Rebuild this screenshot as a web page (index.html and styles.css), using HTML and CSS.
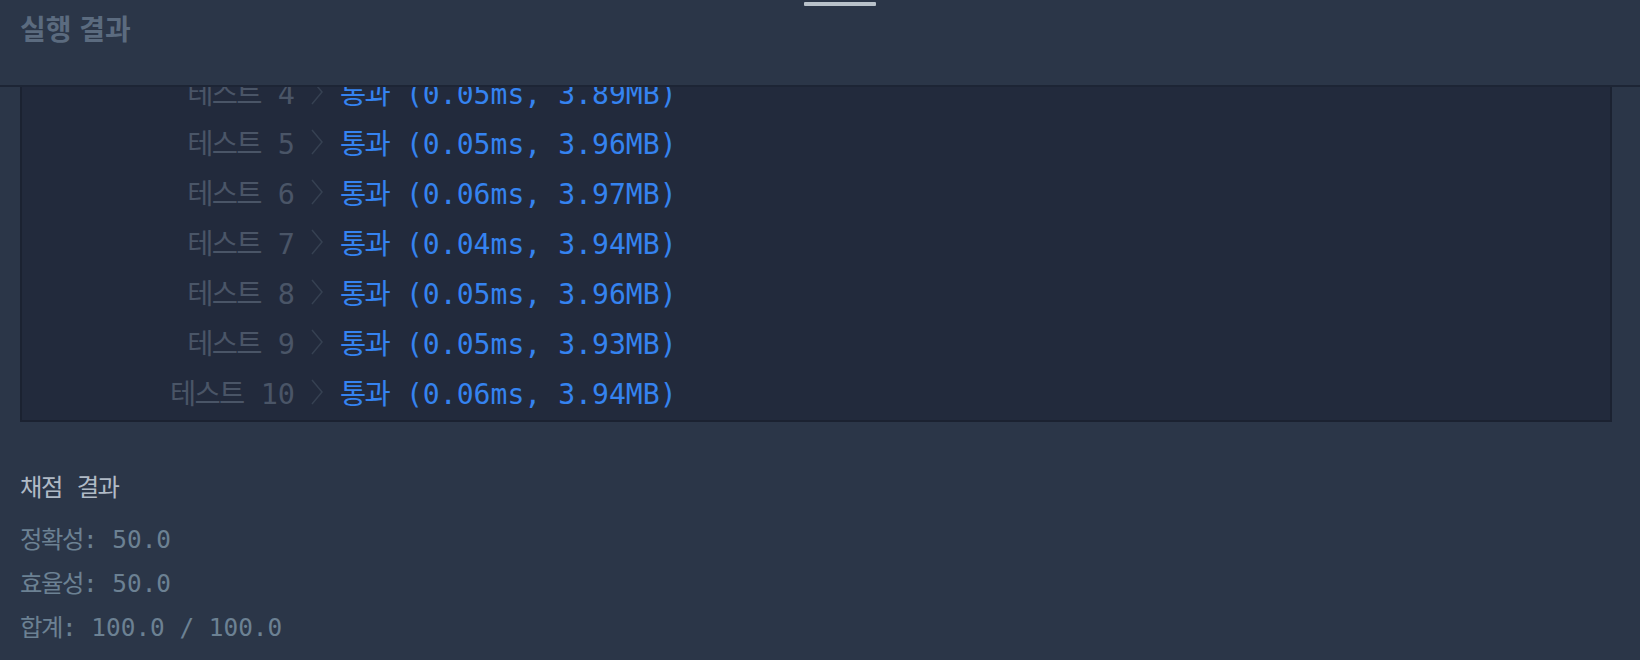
FILE: index.html
```html
<!DOCTYPE html>
<html lang="ko">
<head>
<meta charset="utf-8">
<title>실행 결과</title>
<link rel="stylesheet" href="styles.css">
</head>
<body>
<div class="handle"></div>
<header class="head"><h2 class="head-title">실행 결과</h2></header>
<div class="console">
  <div class="rows">
    <div class="row"><span class="label"><span class="ko">테스트</span> 4</span><svg class="chev" viewBox="0 0 12 26" width="12" height="26"><polyline points="1,1 11,13 1,25"/></svg><span class="status"><span class="ko">통과</span> (0.05ms, 3.89MB)</span></div>
    <div class="row"><span class="label"><span class="ko">테스트</span> 5</span><svg class="chev" viewBox="0 0 12 26" width="12" height="26"><polyline points="1,1 11,13 1,25"/></svg><span class="status"><span class="ko">통과</span> (0.05ms, 3.96MB)</span></div>
    <div class="row"><span class="label"><span class="ko">테스트</span> 6</span><svg class="chev" viewBox="0 0 12 26" width="12" height="26"><polyline points="1,1 11,13 1,25"/></svg><span class="status"><span class="ko">통과</span> (0.06ms, 3.97MB)</span></div>
    <div class="row"><span class="label"><span class="ko">테스트</span> 7</span><svg class="chev" viewBox="0 0 12 26" width="12" height="26"><polyline points="1,1 11,13 1,25"/></svg><span class="status"><span class="ko">통과</span> (0.04ms, 3.94MB)</span></div>
    <div class="row"><span class="label"><span class="ko">테스트</span> 8</span><svg class="chev" viewBox="0 0 12 26" width="12" height="26"><polyline points="1,1 11,13 1,25"/></svg><span class="status"><span class="ko">통과</span> (0.05ms, 3.96MB)</span></div>
    <div class="row"><span class="label"><span class="ko">테스트</span> 9</span><svg class="chev" viewBox="0 0 12 26" width="12" height="26"><polyline points="1,1 11,13 1,25"/></svg><span class="status"><span class="ko">통과</span> (0.05ms, 3.93MB)</span></div>
    <div class="row"><span class="label"><span class="ko">테스트</span> 10</span><svg class="chev" viewBox="0 0 12 26" width="12" height="26"><polyline points="1,1 11,13 1,25"/></svg><span class="status"><span class="ko">통과</span> (0.06ms, 3.94MB)</span></div>
  </div>
</div>
<section class="score">
  <div class="score-title"><span class="ko">채점</span> <span class="ko">결과</span></div>
  <div class="score-line"><span class="ko">정확성</span>: 50.0</div>
  <div class="score-line"><span class="ko">효율성</span>: 50.0</div>
  <div class="score-line"><span class="ko">합계</span>: 100.0 / 100.0</div>
</section>
</body>
</html>
```
FILE: styles.css
```css
html, body {
  margin: 0;
  padding: 0;
}
body {
  background: #2b3648;
  width: 1640px;
  height: 660px;
  overflow: hidden;
  position: relative;
  font-family: "DejaVu Sans Mono", "Noto Sans CJK KR", monospace;
}
.handle {
  position: absolute;
  left: 804px;
  top: 2px;
  width: 72px;
  height: 4px;
  border-radius: 1px;
  background: #b9c2ca;
}
.head {
  height: 85px;
  border-bottom: 2px solid #1d2535;
  box-sizing: content-box;
}
.head-title {
  margin: 0;
  padding: 10px 0 0 20px;
  font-family: "Noto Sans CJK KR", "Noto Sans", sans-serif;
  font-size: 28px;
  line-height: 36px;
  font-weight: 700;
  color: #5b6b7f;
}
.ko {
  font-family: "Noto Sans CJK KR", sans-serif;
  letter-spacing: -0.06em;
}
.console {
  margin: 0 28px 0 20px;
  background: #222a3c;
  border: 2px solid #1b2231;
  border-top: none;
  overflow: hidden;
}
.rows {
  margin-top: -19px;
  padding-bottom: 2px;
}
.row {
  display: flex;
  align-items: center;
  height: 50px;
  font-size: 28.5px;
  line-height: 50px;
  white-space: pre;
}
.label {
  width: 273px;
  text-align: right;
  color: #4a5567;
}
.chev {
  margin-left: 16px;
  margin-top: -2px;
  fill: none;
  stroke: #364152;
  stroke-width: 1.5;
}
.status {
  margin-left: 17px;
  font-size: 28.1px;
  color: #3583f0;
}
.status .ko {
  font-size: 28.5px;
}
.score {
  padding: 44px 0 0 20px;
}
.score .ko {
  line-height: 1;
}
.score-title {
  font-size: 24.4px;
  line-height: 44px;
  color: #b0bac6;
  margin-bottom: 8px;
  white-space: pre;
}
.score-line {
  font-size: 24.4px;
  line-height: 44px;
  color: #6c8193;
  white-space: pre;
}
```
